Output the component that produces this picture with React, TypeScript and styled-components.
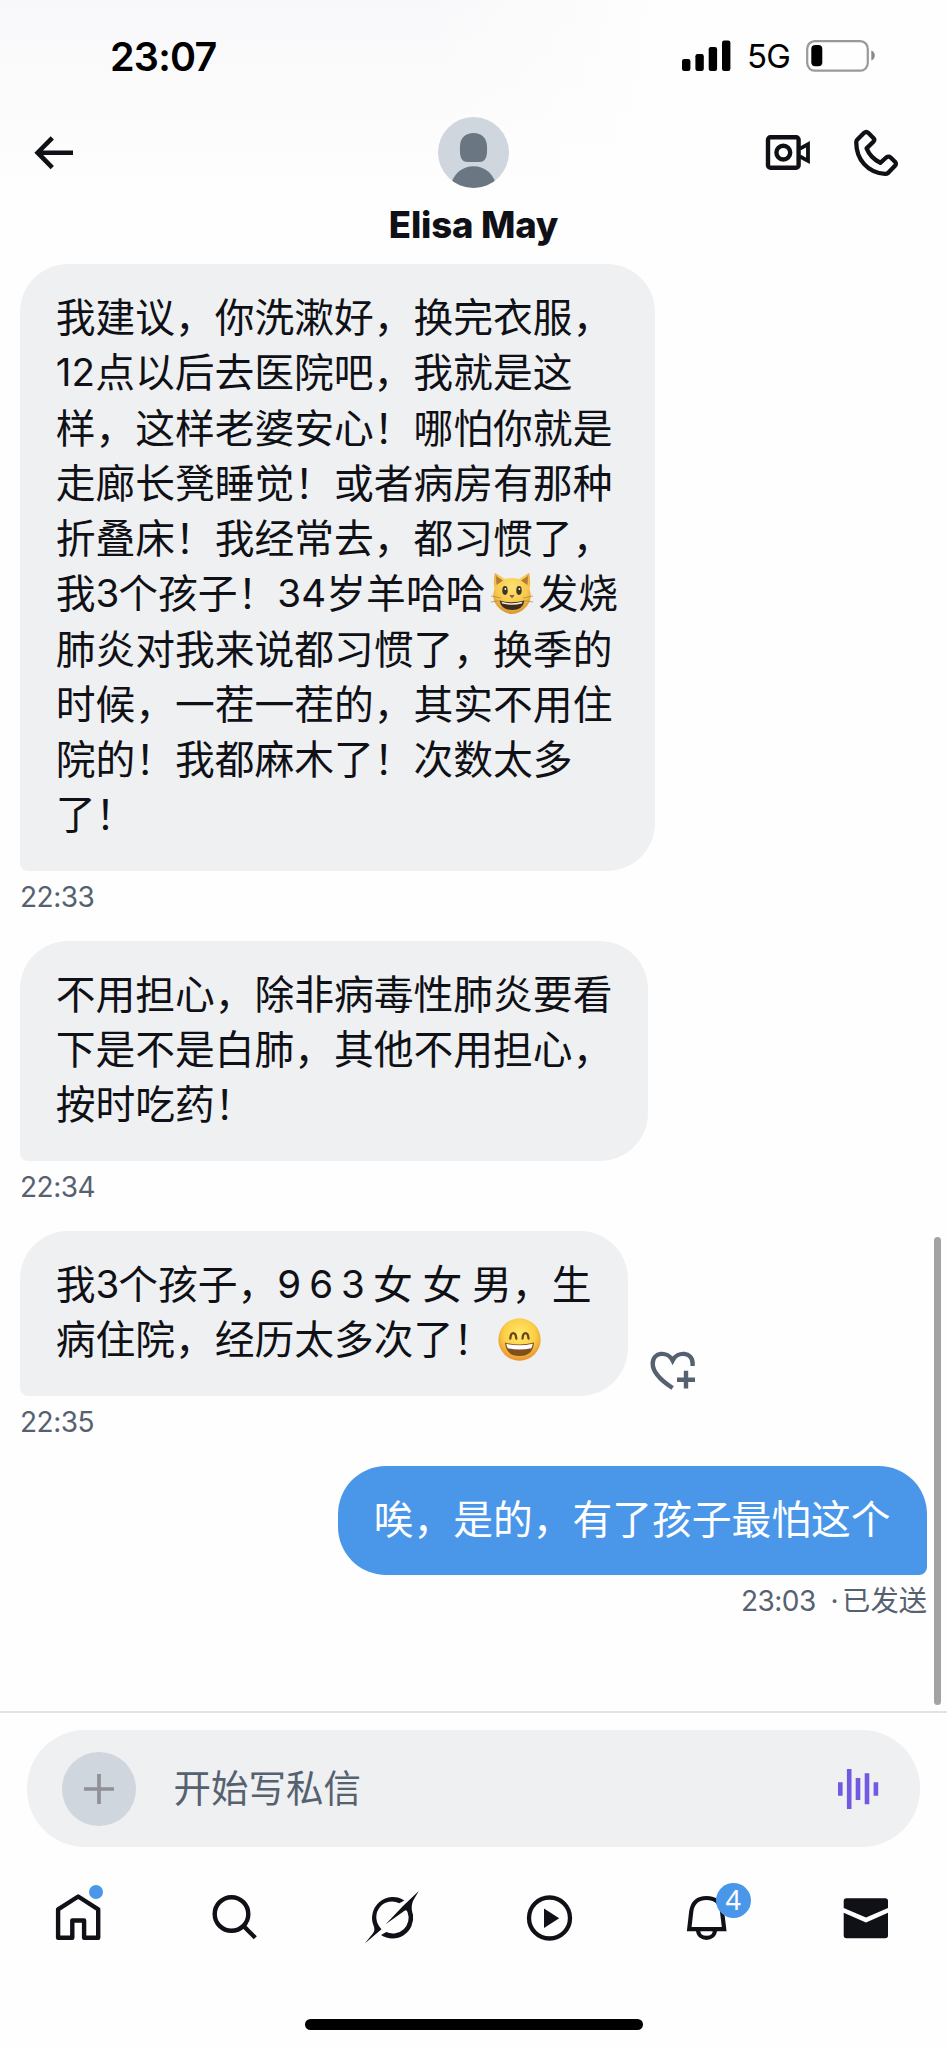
import React from 'react';
import styled, { createGlobalStyle } from 'styled-components';

const GlobalStyle = createGlobalStyle`
  * { box-sizing: border-box; }
  html, body { margin: 0; padding: 0; background: #fefefe; }
  body { font-family: Inter, "Noto Sans CJK SC", sans-serif; }
  svg { display: block; flex: none; }
`;

const ink = '#0f1117';
const slate = '#566170';
const blue = '#4a97ea';

const Screen = styled.div`
  width: 947px;
  height: 2048px;
  display: flex;
  flex-direction: column;
  overflow: hidden;
  color: ${ink};
  background:
    linear-gradient(to right, rgba(254, 254, 254, 0) 45%, #fefefe 70%),
    linear-gradient(to bottom, #f8f8fa 0, #fefefe 190px);
`;

const StatusBar = styled.div`
  height: 110px;
  padding: 0 71px 0 110px;
  display: flex;
  justify-content: space-between;
`;

const Clock = styled.div`
  height: 112px;
  line-height: 114px;
  font-size: 39.5px;
  font-weight: 600;
  letter-spacing: -0.8px;
  color: #000;
`;

const StatusIcons = styled.div`
  display: flex;
  height: 112px;
  align-items: center;
`;

const Network = styled.span`
  width: 59px;
  margin-left: 16px;
  line-height: 119px;
  font-size: 33px;
  letter-spacing: -0.8px;
  color: #000;
`;

const Header = styled.header`
  height: 154px;
  display: flex;
  justify-content: space-between;
  padding: 7px 48px 0 34px;
`;

const HeaderSide = styled.div<{ $end?: boolean }>`
  width: 200px;
  height: 71px;
  display: flex;
  align-items: center;
  gap: 42px;
  justify-content: ${p => (p.$end ? 'flex-end' : 'flex-start')};
`;

const Contact = styled.div`
  display: flex;
  flex-direction: column;
  align-items: center;
  margin-left: 14px;
`;

const Name = styled.div`
  margin-top: 15px;
  line-height: 44px;
  font-size: 36.5px;
  font-weight: 800;
  letter-spacing: -0.2px;
  white-space: nowrap;
`;

const Thread = styled.main`
  position: relative;
  height: 1449px;
  display: flex;
  flex-direction: column;
  padding: 0 20px;
  border-bottom: 2px solid #e0e3e6;
`;

const Message = styled.div<{ $mine?: boolean }>`
  display: flex;
  flex-direction: column;
  align-items: ${p => (p.$mine ? 'flex-end' : 'flex-start')};
`;

const BubbleRow = styled.div`
  display: flex;
  align-items: flex-end;
`;

const Bubble = styled.div<{ $width: number; $mine?: boolean }>`
  width: ${p => p.$width}px;
  padding: 26px 0 28.5px 35.7px;
  border-radius: ${p => (p.$mine ? '48px 48px 8px 48px' : '48px 48px 48px 8px')};
  background: ${p => (p.$mine ? blue : '#eff0f2')};
  color: ${p => (p.$mine ? '#fff' : ink)};
  font-size: 39.78px;
  line-height: 55.25px;
`;

const Line = styled.div`
  display: flex;
  height: 55.25px;
  white-space: pre;
  text-spacing-trim: space-all;
`;

const Digits = styled.span<{ $gap?: number }>`
  font-size: 38.5px;
  letter-spacing: ${p => p.$gap ?? -1}px;
`;

const Emoji = styled.span<{ $before: number; $after: number }>`
  display: flex;
  align-items: center;
  margin: 0 ${p => p.$after}px 0 ${p => p.$before}px;
`;

const Meta = styled.div`
  display: flex;
  height: 69.8px;
  line-height: 52px;
  font-size: 28px;
  letter-spacing: -0.5px;
  color: ${slate};
  white-space: pre;
`;

const Status = styled.span`
  margin-left: 4px;
  font-size: 28.3px;
  letter-spacing: 0;
`;

const HeartButton = styled.span`
  margin: 0 0 4px 21px;
`;

const ScrollThumb = styled.div`
  position: absolute;
  right: 6px;
  bottom: 6px;
  width: 7px;
  height: 468px;
  border-radius: 4px;
  background: #a3a3a3;
`;

const Composer = styled.div`
  margin: 17px 27px 0;
  height: 117px;
  border-radius: 58px;
  background: #eff0f2;
  display: flex;
  align-items: center;
  padding: 0 41px 0 35px;
`;

const AddButton = styled.div`
  width: 74px;
  height: 74px;
  border-radius: 50%;
  background: #d0d6dd;
  display: flex;
  align-items: center;
  justify-content: center;
`;

const Placeholder = styled.div`
  flex: 1;
  margin-left: 37.5px;
  font-size: 37.5px;
  line-height: 56px;
  color: ${slate};
`;

const Nav = styled.nav`
  margin-top: 20px;
  width: 945px;
  height: 100px;
  display: grid;
  grid-template-columns: repeat(6, 1fr);
  align-items: center;
  justify-items: center;
`;

const NavItem = styled.div`
  position: relative;
  width: 80px;
  height: 100px;
`;

const Dot = styled.span`
  position: absolute;
  left: 50px;
  top: 18px;
  width: 14px;
  height: 14px;
  border-radius: 50%;
  background: ${blue};
`;

const Badge = styled.span`
  position: absolute;
  left: 47px;
  top: 15.5px;
  width: 35px;
  height: 35px;
  border-radius: 50%;
  background: ${blue};
  color: #fff;
  font-family: "Noto Sans", sans-serif;
  font-size: 27px;
  line-height: 34px;
  text-align: center;
`;

const HomeIndicator = styled.div`
  margin: 52px auto 0;
  width: 338px;
  height: 11px;
  border-radius: 6px;
  background: #000;
`;

const SignalIcon = () => (
  <svg width="49" height="32" viewBox="682 40 49 32">
    <rect x="682" y="59" width="8.4" height="12" rx="2.2" />
    <rect x="695.4" y="54" width="8.4" height="17" rx="2.2" />
    <rect x="708.7" y="47" width="8.4" height="24" rx="2.2" />
    <rect x="722" y="40.5" width="8.4" height="30.5" rx="2.2" />
  </svg>
);

const BatteryIcon = () => (
  <svg width="70" height="32" viewBox="806 40 70 32">
    <rect x="807.2" y="41.2" width="60.6" height="29.4" rx="7.5" fill="none" stroke="#999" strokeWidth="2.2" />
    <rect x="811.3" y="45" width="11" height="21.3" rx="4" />
    <path d="M871.3 50.5C876 52 876 59 871.3 60.5Z" fill="#8a8a8a" />
  </svg>
);

const BackIcon = () => (
  <svg width="40" height="36" viewBox="34 135 40 36" fill="none" stroke={ink} strokeWidth="4.6">
    <path d="M73 152.7H38M52.3 137.8L37.6 152.7L52.3 167.6" />
  </svg>
);

const Avatar = () => (
  <svg width="71" height="71" viewBox="0 0 71 71">
    <defs>
      <clipPath id="face"><circle cx="35.5" cy="35.5" r="35.5" /></clipPath>
    </defs>
    <g clipPath="url(#face)">
      <rect width="71" height="71" fill="#cfd6de" />
      <path d="M35.5 16C43.5 16 48.7 21 49 29C49.4 39 48.5 45 41 45H30C22.5 45 21.6 39 22 29C22.3 21 27.5 16 35.5 16Z" fill="#6a7783" />
      <path d="M12 71C14.5 57 24 49.3 35.5 49.3S56.5 57 59 71Z" fill="#6a7783" />
    </g>
  </svg>
);

const VideoIcon = () => (
  <svg width="46" height="38" viewBox="765 134 46 38" fill="none" stroke={ink} strokeWidth="4.4">
    <rect x="768" y="137.2" width="30.6" height="30.6" rx="2.5" />
    <circle cx="783.3" cy="152.6" r="6.9" />
    <path d="M800 148.6L808 144.3V160.8L800 156.5" strokeWidth="3.8" />
  </svg>
);

const PhoneIcon = () => (
  <svg width="46" height="48" viewBox="853 127.5 46 48" fill="none" stroke={ink} strokeWidth="4.3" strokeLinejoin="round">
    <path d="M864.2 131.3Q866.2 129.5 868.2 131.3L873.6 136.7Q875 138.3 873.6 140L866.6 146.9Q870.5 156.5 880.3 161.3L886.2 156Q888.7 154.3 890.6 156L895 160.2Q896.7 162.2 895 164.3L888 171.5Q886.8 172.5 885 172.4C868 171.5 856 158 856.3 140.5Q856.3 139.2 857.2 138.3Z" />
  </svg>
);

const CatEmoji = () => (
  <svg width="42" height="43" viewBox="0 0 42 43">
    <defs>
      <radialGradient id="fur" cx="50%" cy="35%" r="65%">
        <stop offset="0" stopColor="#fde173" />
        <stop offset=".65" stopColor="#f7c84b" />
        <stop offset="1" stopColor="#d99330" />
      </radialGradient>
    </defs>
    <path d="M4 1L14 7Q21 5 28 7L38 1Q40 8 38.5 17Q42 26 36 34Q29 42 21 42Q13 42 6 34Q0 26 3.5 17Q2 8 4 1Z" fill="url(#fur)" />
    <path d="M5 4L12 8.5L5.5 13ZM37 4L30 8.5L36.5 13Z" fill="#b67a35" />
    <ellipse cx="14" cy="18.5" rx="2.7" ry="4.4" fill="#3d3425" />
    <ellipse cx="28" cy="18.5" rx="2.7" ry="4.4" fill="#3d3425" />
    <circle cx="14.4" cy="17" r=".9" fill="#fff" />
    <circle cx="28.4" cy="17" r=".9" fill="#fff" />
    <path d="M18.3 23H23.7L21 26.5Z" fill="#9c5a45" />
    <path d="M8.5 28.5Q21 32 33.5 28.5Q32 38 21 38T8.5 28.5Z" fill="#3d2b1c" />
    <path d="M10.5 29.8Q21 32.6 31.5 29.8L30.8 31.6Q21 34 11.2 31.6Z" fill="#f6f1e4" />
    <path d="M0 24L10 26M0 30L10 28.5M42 24L32 26M42 30L32 28.5" stroke="#b98d45" strokeWidth=".8" />
  </svg>
);

const GrinEmoji = () => (
  <svg width="43" height="43" viewBox="0 0 43 43">
    <defs>
      <radialGradient id="grin" cx="50%" cy="38%" r="62%">
        <stop offset="0" stopColor="#ffe96a" />
        <stop offset=".6" stopColor="#fbcf47" />
        <stop offset="1" stopColor="#e8922c" />
      </radialGradient>
    </defs>
    <circle cx="21.5" cy="21.5" r="21.2" fill="url(#grin)" />
    <path d="M12.300 20.500Q12.800 15.200 15.300 15.200T18.300 20.500M24.500 20.500Q25 15.200 27.500 15.200T30.500 20.500" fill="none" stroke="#6b4316" strokeWidth="2.300" strokeLinecap="round" />
    <path d="M7 24.500Q21.500 28.500 36 24.500Q35 38 21.500 38T7 24.500Z" fill="#80501c" />
    <path d="M8.300 25.800Q21.500 28.800 34.700 25.800Q34.500 28.500 33.200 30.200Q21.500 33 9.800 30.200Q8.500 28.500 8.300 25.800Z" fill="#fff" />
  </svg>
);

const HeartPlusIcon = () => (
  <svg width="48" height="42" viewBox="649 1349 48 42" fill="none" stroke={slate} strokeWidth="4.4">
    <path d="M672.6 1387C659.500 1378.500 652.600 1370 652.700 1362.500C652.900 1350.800 667.500 1349.700 672.600 1359.500C677.500 1349.700 692.300 1350.800 692.600 1362.300V1365" />
    <path d="M686 1369.8V1387.5M677 1378.7H695" />
  </svg>
);

const PlusIcon = () => (
  <svg width="30" height="30" viewBox="0 0 30 30" stroke="#8f9098" strokeWidth="3.7">
    <path d="M15 0V30M0 15H30" />
  </svg>
);

const VoiceIcon = () => (
  <svg width="42" height="42" viewBox="0 0 42 42" stroke="#7359e2" strokeWidth="4.6">
    <path d="M3.3 14.2V27.7M12.2 1V41M21 10V32M30 5.3V36.3M38.9 14.2V27.7" />
  </svg>
);

const navIcons = [
  {
    name: 'home',
    view: '39 1867 80 100',
    art: <path d="M78.2 1896.5L98.2 1909.3V1937.8H84.1V1920.5H72.3V1937.8H58.1V1909.3Z" fill="none" stroke={ink} strokeWidth="4.4" strokeLinejoin="round" />,
  },
  {
    name: 'search',
    view: '196 1867 80 100',
    art: (
      <g fill="none" stroke={ink} strokeWidth="4.4">
        <circle cx="231.5" cy="1914" r="16.8" />
        <path d="M243.5 1926L255.3 1937.8" />
      </g>
    ),
  },
  {
    name: 'grok',
    view: '354 1867 80 100',
    art: (
      <g fill={ink}>
        <path d="M404.3 1900.5A20.8 20.8 0 0 0 373.800 1926.200Q375.300 1930.500 373 1933.300L364.800 1943.500L381.500 1929.300L379.500 1926.700A15.700 15.700 0 0 1 399.300 1903.300Z" />
        <path d="M418.800 1891L403 1906L385.700 1924.300L404.500 1910.800Q406.500 1909.500 407.500 1912A15.700 15.700 0 0 1 386.300 1932L381 1935A20.800 20.800 0 0 0 413 1914.500C411 1909 411.500 1904 413.500 1900Z" />
      </g>
    ),
  },
  {
    name: 'video',
    view: '511 1867 80 100',
    art: (
      <g>
        <circle cx="549.5" cy="1918" r="20.5" fill="none" stroke={ink} strokeWidth="4.3" />
        <path d="M544 1908.5L559.2 1918.3L544 1928Z" fill={ink} />
      </g>
    ),
  },
  {
    name: 'alerts',
    view: '669 1867 80 100',
    art: (
      <g fill="none" stroke={ink} strokeWidth="4.2">
        <path d="M689.2 1929.2L691.3 1911Q693.5 1898 706.5 1898T722 1911L724.2 1929.2Z" />
        <path d="M698 1930C698.5 1940.5 714.5 1940.5 715 1930" />
      </g>
    ),
  },
  {
    name: 'messages',
    view: '826 1867 80 100',
    art: (
      <g fill={ink}>
        <path d="M843.7 1908V1901Q843.7 1898.3 846.5 1898.3H885.3Q888 1898.3 888 1901V1908L866 1917.6Z" />
        <path d="M843.7 1912.7L866 1922.5L888 1912.7V1935.5Q888 1938.2 885.3 1938.2H846.5Q843.7 1938.2 843.7 1935.5Z" />
      </g>
    ),
  },
];

export default function App() {
  return (
    <>
      <GlobalStyle />
      <Screen lang="zh-CN">
        <StatusBar>
          <Clock>23:07</Clock>
          <StatusIcons>
            <SignalIcon />
            <Network>5G</Network>
            <BatteryIcon />
          </StatusIcons>
        </StatusBar>
        <Header>
          <HeaderSide><BackIcon /></HeaderSide>
          <Contact>
            <Avatar />
            <Name>Elisa May</Name>
          </Contact>
          <HeaderSide $end>
            <VideoIcon />
            <PhoneIcon />
          </HeaderSide>
        </Header>
        <Thread>
          <Message>
            <Bubble $width={635}>
              <Line>我建议，你洗漱好，换完衣服，</Line>
              <Line><Digits $gap={0.2}>12</Digits>点以后去医院吧，我就是这</Line>
              <Line>样，这样老婆安心！哪怕你就是</Line>
              <Line>走廊长凳睡觉！或者病房有那种</Line>
              <Line>折叠床！我经常去，都习惯了，</Line>
              <Line>
                我<Digits>3</Digits>个孩子！<Digits $gap={0.2}>34</Digits>岁羊哈哈
                <Emoji $before={6} $after={5}><CatEmoji /></Emoji>发烧
              </Line>
              <Line>肺炎对我来说都习惯了，换季的</Line>
              <Line>时候，一茬一茬的，其实不用住</Line>
              <Line>院的！我都麻木了！次数太多</Line>
              <Line>了！</Line>
            </Bubble>
            <Meta>22:33</Meta>
          </Message>
          <Message>
            <Bubble $width={628}>
              <Line>不用担心，除非病毒性肺炎要看</Line>
              <Line>下是不是白肺，其他不用担心，</Line>
              <Line>按时吃药！</Line>
            </Bubble>
            <Meta>22:34</Meta>
          </Message>
          <Message>
            <BubbleRow>
              <Bubble $width={608}>
                <Line>我<Digits>3</Digits>个孩子，<Digits $gap={-1.4}>9 6 3 </Digits>女<Digits> </Digits>女<Digits> </Digits>男，生</Line>
                <Line>
                  病住院，经历太多次了！
                  <Emoji $before={5} $after={0}><GrinEmoji /></Emoji>
                </Line>
              </Bubble>
              <HeartButton><HeartPlusIcon /></HeartButton>
            </BubbleRow>
            <Meta>22:35</Meta>
          </Message>
          <Message $mine>
            <Bubble $width={589} $mine>
              <Line>唉，是的，有了孩子最怕这个</Line>
            </Bubble>
            <Meta>23:03  ·<Status>已发送</Status></Meta>
          </Message>
          <ScrollThumb />
        </Thread>
        <Composer>
          <AddButton><PlusIcon /></AddButton>
          <Placeholder>开始写私信</Placeholder>
          <VoiceIcon />
        </Composer>
        <Nav>
          {navIcons.map(icon => (
            <NavItem key={icon.name}>
              <svg width="80" height="100" viewBox={icon.view}>{icon.art}</svg>
              {icon.name === 'home' && <Dot />}
              {icon.name === 'alerts' && <Badge>4</Badge>}
            </NavItem>
          ))}
        </Nav>
        <HomeIndicator />
      </Screen>
    </>
  );
}
